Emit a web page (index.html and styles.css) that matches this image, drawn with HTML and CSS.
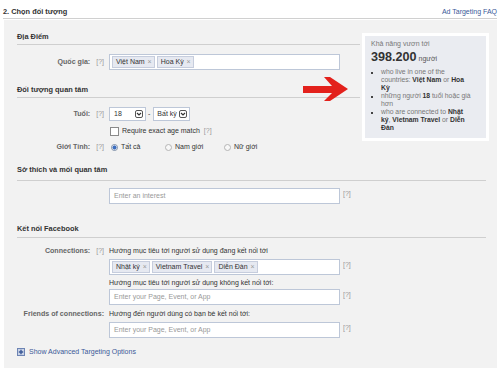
FILE: index.html
```html
<!DOCTYPE html>
<html>
<head>
<meta charset="utf-8">
<link rel="stylesheet" href="styles.css">
</head>
<body>
<div class="top">
  <span class="step">2. Chọn đối tượng</span>
  <a class="faq">Ad Targeting FAQ</a>
</div>
<div class="panel">
  <div class="reach">
    <div class="reach-label">Khả năng vươn tới</div>
    <div class="reach-num"><b>398.200</b><span>người</span></div>
    <ul>
      <li>who live in one of the countries: <b>Việt Nam</b> or <b>Hoa Kỳ</b></li>
      <li>những người <b>18</b> tuổi hoặc già hơn</li>
      <li>who are connected to <b>Nhật ký</b>, <b>Vietnam Travel</b> or <b>Diễn Đàn</b></li>
    </ul>
  </div>
  <svg class="arrow" width="46" height="25" viewBox="0 0 46 25">
    <polygon points="0,9 29,9 21,0 27,0 45,12 27,24 21,24 29,16 0,16" fill="#e3211c"/>
  </svg>

  <h3 class="sec s-loc">Địa Điểm</h3>
  <div class="row r-country">
    <div class="lbl">Quốc gia: <span class="q">[?]</span></div>
    <div class="input tokens">
      <span class="tok">Việt Nam <i>×</i></span><span class="tok">Hoa Kỳ <i>×</i></span>
    </div>
  </div>

  <h3 class="sec s-aud">Đối tượng quan tâm</h3>
  <div class="row r-age">
    <div class="lbl">Tuổi: <span class="q">[?]</span></div>
    <div class="selects">
      <span class="sel s18">18<span class="dd"><svg width="8" height="8" viewBox="0 0 8 8"><rect x="0.5" y="0.5" width="7" height="7" rx="1.5" fill="#fff" stroke="#555"/><path d="M2 3 L4 5 L6 3" fill="none" stroke="#333" stroke-width="1.2"/></svg></span></span>
      <span class="dash">-</span>
      <span class="sel sany">Bất kỳ<span class="dd"><svg width="8" height="8" viewBox="0 0 8 8"><rect x="0.5" y="0.5" width="7" height="7" rx="1.5" fill="#fff" stroke="#555"/><path d="M2 3 L4 5 L6 3" fill="none" stroke="#333" stroke-width="1.2"/></svg></span></span>
    </div>
  </div>
  <div class="row r-exact">
    <div class="lbl"></div>
    <div class="check"><span class="box"></span>Require exact age match <span class="q">[?]</span></div>
  </div>
  <div class="row r-gender">
    <div class="lbl">Giới Tính: <span class="q">[?]</span></div>
    <div class="radios">
      <span class="radio r1"><span class="dot on"></span>Tất cả</span>
      <span class="radio r2"><span class="dot"></span>Nam giới</span>
      <span class="radio r3"><span class="dot"></span>Nữ giới</span>
    </div>
  </div>

  <h3 class="sec s-int">Sở thích và mối quan tâm</h3>
  <div class="row r-interest">
    <div class="lbl"></div>
    <div class="field"><div class="input ph">Enter an interest</div><span class="q">[?]</span></div>
  </div>

  <h3 class="sec s-fb">Kết nối Facebook</h3>
  <div class="row r-conn">
    <div class="lbl">Connections: <span class="q">[?]</span></div>
    <div class="col">
      <div class="hint">Hướng mục tiêu tới người sử dụng đang kết nối tới</div>
      <div class="field f-tok"><div class="input tokens"><span class="tok">Nhật ký <i>×</i></span><span class="tok">Vietnam Travel <i>×</i></span><span class="tok">Diễn Đàn <i>×</i></span></div><span class="q">[?]</span></div>
      <div class="hint h2">Hướng mục tiêu tới người sử dụng không kết nối tới:</div>
      <div class="field f-not"><div class="input ph">Enter your Page, Event, or App</div><span class="q">[?]</span></div>
    </div>
  </div>
  <div class="row r-friends">
    <div class="lbl">Friends of connections:</div>
    <div class="col">
      <div class="hint">Hướng đến người dùng có bạn bè kết nối tới:</div>
      <div class="field f-fr"><div class="input ph">Enter your Page, Event, or App</div><span class="q">[?]</span></div>
    </div>
  </div>

  <div class="adv"><svg width="8" height="8" viewBox="0 0 8 8"><rect x="0.5" y="0.5" width="7" height="7" fill="#c9d3e6" stroke="#6d84b4"/><path d="M4 1.8 V6.2 M1.8 4 H6.2" stroke="#3b5998" stroke-width="1.4"/></svg><a>Show Advanced Targeting Options</a></div>
</div>
</body>
</html>
```

FILE: styles.css
```css
* { box-sizing: border-box; }
html, body { margin: 0; padding: 0; background: #fff; }
body {
  font-family: "Liberation Sans", Arial, sans-serif;
  font-size: 7px;
  line-height: 10px;
  color: #333;
  width: 500px;
  height: 373px;
  overflow: hidden;
  white-space: nowrap;
}
a { color: #3b5998; text-decoration: none; }

.top {
  display: flex;
  justify-content: space-between;
  margin: 0 3px;
  padding: 7px 0 1px;
  border-bottom: 1px solid #d0d0d0;
}
.step { font-weight: bold; font-size: 7.4px; color: #333; }
.faq { font-size: 7px; }

.panel {
  position: relative;
  margin: 1px 3px 0 4px;
  padding: 12px 11px 11px 13px;
  background: #f2f2f2;
}

.reach {
  float: right;
  width: 127px;
  margin: 1px -3px 0 2px;
  border: 3px solid #fff;
  background: #eaecf1;
  padding: 3px 13px 6px 6px;
  color: #777;
  white-space: normal;
}
.reach-label { color: #777; }
.reach-num { margin-top: 1px; line-height: 14px; }
.reach-num b { font-size: 12.6px; color: #333; }
.reach-num span { font-size: 7px; margin-left: 2px; color: #555; }
.reach ul {
  margin: 2px 0 0;
  padding: 0 0 0 10px;
  list-style: square;
  font-size: 6.8px;
  line-height: 8px;
}
.reach li::marker { color: #444; font-size: 6px; }
.reach b { color: #333; }

.arrow { position: absolute; left: 299px; top: 57px; }

.sec {
  display: flow-root;
  margin: 0;
  font-size: 7.4px;
  font-weight: bold;
  line-height: 10px;
  padding-bottom: 2px;
  border-bottom: 1px solid #cfcfcf;
  color: #333;
}
.s-aud { margin-top: 15px; }
.s-int { margin-top: 13px; padding-bottom: 5px; }
.s-fb { margin-top: 20px; padding-bottom: 3px; }

.row { display: flex; align-items: center; }
.lbl {
  width: 87px;
  flex: none;
  margin-right: 5px;
  text-align: right;
  font-weight: bold;
  font-size: 7.1px;
  color: #666;
}
.q { font-weight: normal; font-size: 7px; color: #999; margin-left: 4px; }

.input {
  width: 231px;
  height: 16px;
  flex: none;
  background: #fff;
  border: 1px solid #bdc7d8;
}
.ph { color: #999; padding: 2px 4px; }
.tokens { display: flex; align-items: center; padding: 1px 2px; gap: 2px; }
.tok {
  height: 12px;
  line-height: 10px;
  padding: 0 2px 0 3px;
  background: #e6e9f1;
  border: 1px solid #c6cddd;
  color: #333;
}
.tok i { font-style: normal; color: #999; margin-left: 1px; }

.r-country { margin-top: 9px; }
.r-age { margin-top: 9px; }
.selects { display: flex; align-items: center; }
.sel {
  display: flex;
  align-items: center;
  justify-content: space-between;
  height: 14px;
  border: 1px solid #bdc7d8;
  background: #fff;
  padding: 0 2px 0 4px;
}
.s18 { width: 37px; }
.sany { width: 37px; padding-left: 3px; }
.dd { display: flex; }
.dash { margin: 0 3px 0 2px; }

.r-exact { margin-top: 5px; }
.check { display: flex; align-items: center; }
.box {
  width: 9px; height: 9px;
  margin: 0 3px 0 1px;
  border: 1px solid #8a8a8a;
  background: #fff;
}
.r-gender { margin-top: 6px; }
.radios { display: flex; }
.radio { display: flex; align-items: center; }
.r1 { width: 54px; }
.r2 { width: 59px; }
.dot {
  width: 7px; height: 7px;
  border-radius: 50%;
  margin: 0 3px 0 2px;
  border: 1px solid #b5b5b5;
  background: #f8f8f8;
}
.dot.on { background: radial-gradient(circle, #3b6dbf 0 1.8px, #fff 2.3px); border-color: #7d8ea8; }

.r-interest { margin-top: 7px; }
.field { display: flex; align-items: flex-start; }
.field .q { margin-top: 1px; margin-left: 3px; }

.r-conn { margin-top: 8px; align-items: flex-start; }
.col { display: flex; flex-direction: column; }
.f-tok { margin-top: 3px; }
.h2 { margin-top: 3px; }
.f-not { margin-top: 1px; }
.r-friends { margin-top: 4px; align-items: flex-start; }
.f-fr { margin-top: 3px; }

.adv { display: flex; align-items: center; margin-top: 9px; }
.adv svg { margin: 0 4px 0 0; }
```
